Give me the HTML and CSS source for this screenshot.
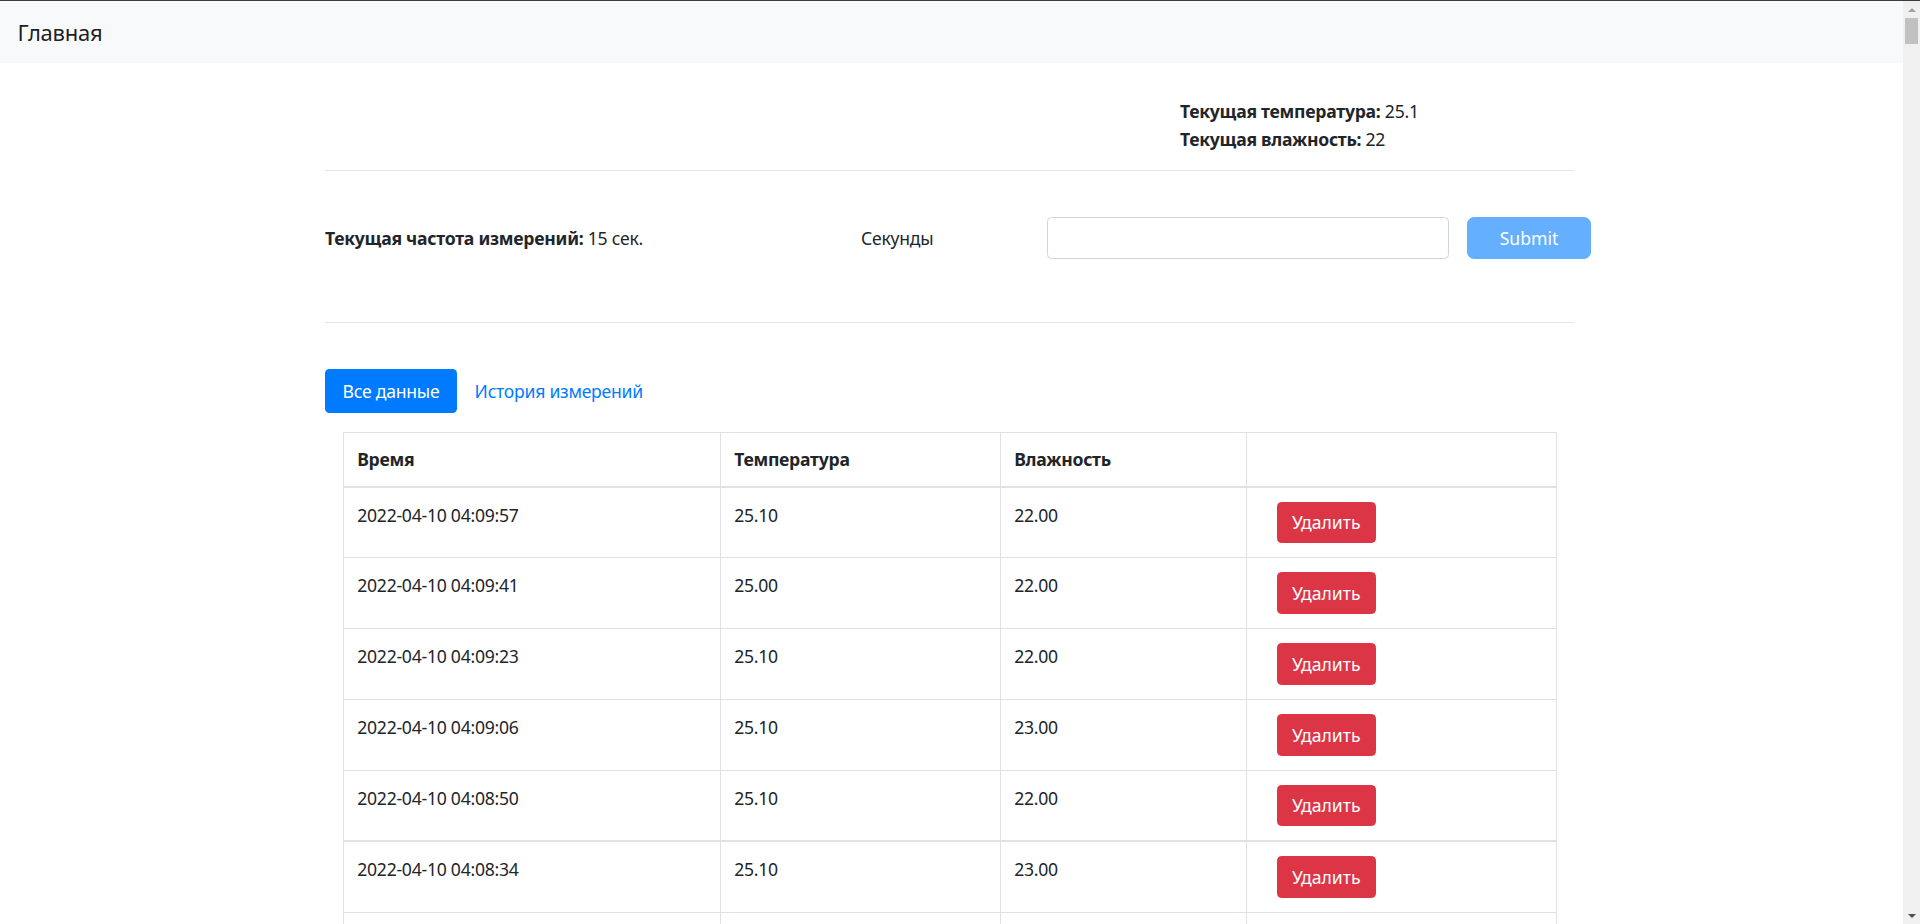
FILE: index.html
```html
<!DOCTYPE html>
<html lang="ru">
<head>
<meta charset="utf-8">
<title>Главная</title>
<link rel="stylesheet" href="styles.css">
</head>
<body>
<nav class="navbar"><a class="brand" href="#">Главная</a></nav>
<main class="page">
  <section class="current">
    <div class="current-line"><b>Текущая температура:</b> 25.1</div>
    <div class="current-line"><b>Текущая влажность:</b> 22</div>
  </section>
  <hr class="divider">
  <section class="freq">
    <div class="freq-now"><b>Текущая частота измерений:</b> 15 сек.</div>
    <form class="freq-form">
      <label class="freq-label" for="sec">Секунды</label>
      <input id="sec" class="freq-input" type="text">
      <button class="btn-submit" type="button" disabled>Submit</button>
    </form>
  </section>
  <hr class="divider">
  <nav class="pills">
    <a class="pill pill-active" href="#">Все данные</a>
    <a class="pill" href="#">История измерений</a>
  </nav>
  <table class="data-table">
    <colgroup>
      <col class="col-time"><col class="col-temp"><col class="col-hum"><col class="col-act">
    </colgroup>
    <thead>
      <tr><th>Время</th><th>Температура</th><th>Влажность</th><th></th></tr>
    </thead>
    <tbody>
      <tr><td>2022-04-10 04:09:57</td><td>25.10</td><td>22.00</td><td><button class="btn-delete" type="button">Удалить</button></td></tr>
      <tr><td>2022-04-10 04:09:41</td><td>25.00</td><td>22.00</td><td><button class="btn-delete" type="button">Удалить</button></td></tr>
      <tr><td>2022-04-10 04:09:23</td><td>25.10</td><td>22.00</td><td><button class="btn-delete" type="button">Удалить</button></td></tr>
      <tr><td>2022-04-10 04:09:06</td><td>25.10</td><td>23.00</td><td><button class="btn-delete" type="button">Удалить</button></td></tr>
      <tr><td>2022-04-10 04:08:50</td><td>25.10</td><td>22.00</td><td><button class="btn-delete" type="button">Удалить</button></td></tr>
    </tbody>
    <tbody>
      <tr><td>2022-04-10 04:08:34</td><td>25.10</td><td>23.00</td><td><button class="btn-delete" type="button">Удалить</button></td></tr>
      <tr class="row-below"><td></td><td></td><td></td><td></td></tr>
    </tbody>
  </table>
</main>
<div class="scrollbar" aria-hidden="true">
  <div class="sb-arrow sb-up"></div>
  <div class="sb-track"><div class="sb-thumb"></div></div>
  <div class="sb-arrow sb-down"></div>
</div>
</body>
</html>
```

FILE: styles.css
```css
html {
  overflow: hidden;
  height: 100%;
}
body {
  margin: 0;
  font-family: "Noto Sans", "Open Sans", sans-serif;
  font-size: 17.6px;
  line-height: 26.4px;
  letter-spacing: -0.25px;
  color: #212529;
  background: #fff;
}
b {
  font-weight: 700;
}

/* navbar */
.navbar {
  height: 62px;
  border-top: 1px solid #3c3c3c;
  background: #f8f9fa;
  display: flex;
  align-items: center;
  padding-left: 17.6px;
}
.brand {
  font-size: 22px;
  line-height: 30px;
  color: rgba(0, 0, 0, 0.9);
  text-decoration: none;
}

/* page */
.page {
  margin-left: 325px;
  width: 1249px;
}
.current {
  padding-top: 35px;
  margin-left: 855px;
}
.current-line {
  line-height: 27.5px;
}
.divider {
  margin: 17px 0 0;
  border: 0;
  border-top: 1px solid rgba(0, 0, 0, 0.1);
  height: 0;
}
.freq + .divider {
  margin-top: 0;
}

.freq {
  padding: 46px 0 63px;
  display: flex;
  align-items: center;
}
.freq-now {
  width: 536px;
  flex: none;
}
.freq-form {
  display: flex;
  align-items: center;
}
.freq-label {
  width: 186px;
}
.freq-input {
  box-sizing: border-box;
  width: 402px;
  height: 42px;
  border: 1px solid #ced4da;
  border-radius: 4.4px;
  padding: 6px 13px;
  font: inherit;
  margin: 0;
}
.btn-submit {
  box-sizing: border-box;
  margin-left: 18px;
  width: 124px;
  height: 42px;
  border: 1px solid #007bff;
  background: #007bff;
  color: #fff;
  opacity: 0.6;
  border-radius: 7px;
  font: inherit;
  padding: 0;
}

/* pills */
.pills {
  margin-top: 46px;
  display: flex;
}
.pill {
  display: block;
  padding: 8.8px 17.6px;
  border-radius: 4.4px;
  color: #007bff;
  text-decoration: none;
}
.pill-active {
  background: #007bff;
  color: #fff;
}

/* table */
.data-table {
  margin: 18.5px 0 0 18px;
  width: 1213px;
  table-layout: fixed;
  border-collapse: collapse;
}
.col-time { width: 377px; }
.col-temp { width: 280px; }
.col-hum { width: 246px; }
.col-act { width: 310px; }

.data-table th,
.data-table td {
  border: 1px solid #dee2e6;
  text-align: left;
  vertical-align: top;
}
.data-table th {
  padding: 13.3px 13.2px;
  font-weight: 700;
  border-bottom-width: 2px;
}
.data-table td {
  padding: 14px 13.2px 14px;
}
.data-table tbody + tbody {
  border-top: 2px solid #dee2e6;
}
.row-below td {
  height: 60px;
}
.btn-delete {
  margin-left: 16.5px;
  height: 41.8px;
  padding: 0 14.3px;
  border: 1px solid #dc3545;
  border-radius: 4.4px;
  background: #dc3545;
  color: #fff;
  font: inherit;
  display: block;
}

/* scrollbar overlay */
.scrollbar {
  position: fixed;
  top: 1px;
  right: 0;
  bottom: 0;
  width: 17px;
  background: #f0f0f0;
  display: flex;
  flex-direction: column;
}
.sb-arrow {
  height: 17px;
  flex: none;
  display: flex;
  align-items: center;
  justify-content: center;
}
.sb-up::before {
  content: "";
  border-left: 4px solid transparent;
  border-right: 4px solid transparent;
  border-bottom: 4px solid #a3a3a3;
}
.sb-down::before {
  content: "";
  border-left: 4px solid transparent;
  border-right: 4px solid transparent;
  border-top: 4px solid #505050;
}
.sb-track {
  flex: 1;
  padding: 0 2px;
}
.sb-thumb {
  height: 26px;
  background: #c1c1c1;
}
```
